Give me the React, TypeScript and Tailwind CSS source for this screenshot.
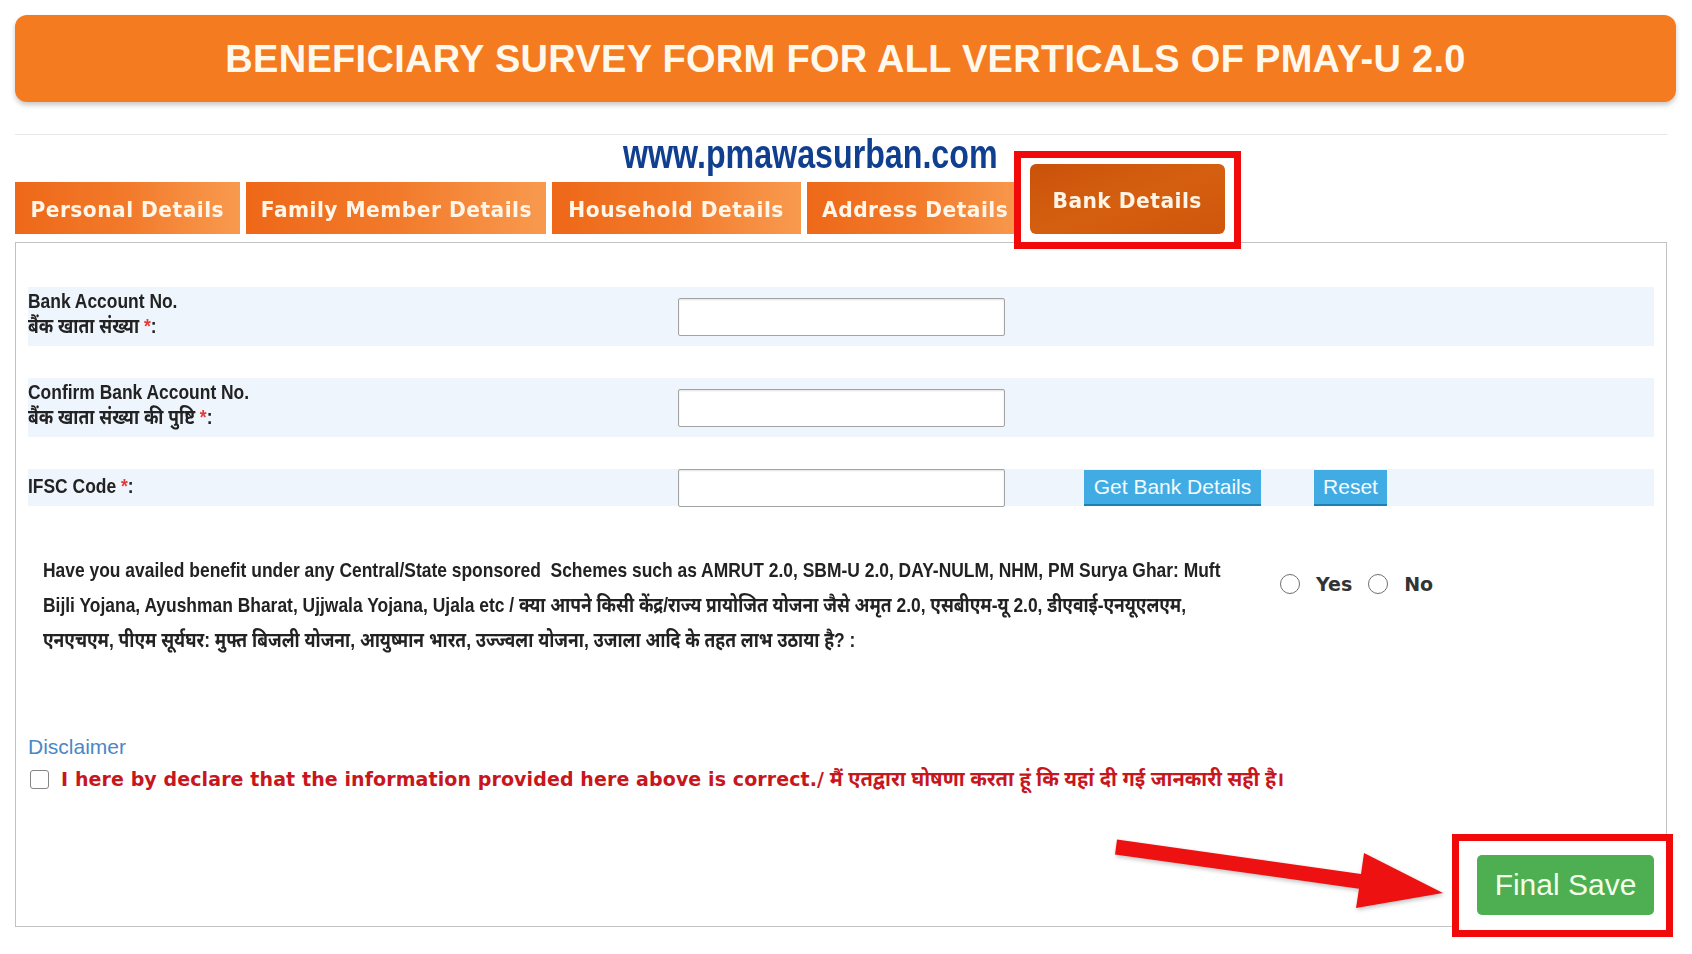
import React from "react";

const sans = "font-['Liberation_Sans','Noto_Sans_Devanagari','Lohit_Devanagari',sans-serif]";

function Tab({ w, children }: { w: string; children: React.ReactNode }) {
  return (
    <div className={`${w} h-[52px] shrink-0 flex items-center justify-center pt-[3px] bg-gradient-to-r from-[#ee6818] via-[#f27a2a] to-[#f89a4e] overflow-hidden`}>
      <span className="block w-max scale-x-[0.92] text-[#fff6ea] font-['DejaVu_Sans',sans-serif] font-bold text-[22px] leading-none tracking-[0.5px] whitespace-nowrap">
        {children}
      </span>
    </div>
  );
}

function Star() {
  return <span className="text-[#e53935]">*</span>;
}

function Input() {
  return (
    <div className="w-[327px] h-[38px] shrink-0 bg-white border border-[#a3a3a3] rounded-[2px] shadow-[inset_0_1px_2px_rgba(0,0,0,0.12)]" />
  );
}

function Narrow({ children, className = "" }: { children: React.ReactNode; className?: string }) {
  return (
    <div className={`w-max origin-left scale-x-[0.83] ${sans} font-bold text-[21px] text-[#222] whitespace-nowrap ${className}`}>
      {children}
    </div>
  );
}

export default function App() {
  return (
    <div className={`relative w-[1692px] h-[954px] bg-white overflow-hidden ${sans}`}>
      {/* Banner */}
      <div className="ml-[15px] mt-[15px] w-[1661px] h-[87px] rounded-[12px] bg-[#f47b20] shadow-[0_3px_5px_rgba(0,0,0,0.22)] flex items-center justify-center">
        <h1 className="text-[38px] font-bold text-[#fff8ec] tracking-[0.3px] leading-none">
          BENEFICIARY SURVEY FORM FOR ALL VERTICALS OF PMAY-U 2.0
        </h1>
      </div>

      <div className="ml-[15px] mt-[32px] w-[1652px] h-px bg-[#e6e6e6]" />

      {/* URL */}
      <div className="h-[30px] -mt-px pl-[623px]">
        <span className="block w-max origin-left scale-x-[0.805] font-bold text-[40px] leading-[40px] text-[#0f3f8e] whitespace-nowrap">
          www.pmawasurban.com
        </span>
      </div>

      {/* Tabs */}
      <div className="ml-[15px] flex items-end gap-[6px] h-[70px]">
        <Tab w="w-[225px]">Personal Details</Tab>
        <Tab w="w-[300px]">Family Member Details</Tab>
        <Tab w="w-[249px]">Household Details</Tab>
        <Tab w="w-[217px]">Address Details</Tab>
        <div className="relative w-[195px] h-[70px] shrink-0">
          <div className="absolute -left-[16px] -right-[16px] -top-[13px] -bottom-[15px] border-[7px] border-[#f00a0a] bg-white z-10" />
          <div className="absolute inset-0 z-20 rounded-[6px] bg-gradient-to-br from-[#c9520a] via-[#d55f10] to-[#cf560c] flex items-center justify-center pt-[4px]">
            <span className="block w-max scale-x-[0.92] text-[#fff4e6] font-['DejaVu_Sans',sans-serif] font-bold text-[22px] leading-none tracking-[0.5px] whitespace-nowrap">
              Bank Details
            </span>
          </div>
        </div>
      </div>

      {/* Panel */}
      <div className="ml-[15px] mt-[8px] w-[1652px] h-[685px] border border-[#c2c2c2] px-[12px] pt-[44px]">
        {/* Row 1 */}
        <div className="h-[59px] bg-[#eef5fc] flex items-center">
          <div className="w-[650px] shrink-0 self-start pt-[1px] leading-[25px]">
            <Narrow>Bank Account No.</Narrow>
            <Narrow>
              बैंक खाता संख्या <Star />:
            </Narrow>
          </div>
          <Input />
        </div>

        {/* Row 2 */}
        <div className="mt-[32px] h-[59px] bg-[#eef5fc] flex items-center">
          <div className="w-[650px] shrink-0 self-start pt-[1px] leading-[25px]">
            <Narrow>Confirm Bank Account No.</Narrow>
            <Narrow>
              बैंक खाता संख्या की पुष्टि <Star />:
            </Narrow>
          </div>
          <Input />
        </div>

        {/* Row 3 */}
        <div className="mt-[32px] h-[37px] bg-[#eef5fc] flex items-center">
          <div className="w-[650px] shrink-0 leading-[25px] pb-[4px]">
            <Narrow>
              IFSC Code <Star />:
            </Narrow>
          </div>
          <Input />
          <button className="ml-[79px] w-[177px] h-[36px] bg-[#41ace3] border-b-2 border-[#1f7fb5] text-[#f4fbff] text-[21px] leading-none">
            Get Bank Details
          </button>
          <button className="ml-[53px] w-[73px] h-[36px] bg-[#41ace3] border-b-2 border-[#1f7fb5] text-[#f4fbff] text-[21px] leading-none">
            Reset
          </button>
        </div>

        {/* Question */}
        <div className="mt-[46px] flex items-start">
          <div className="ml-[15px] w-[1182px] shrink-0">
            <Narrow className="leading-[35px]">
              Have you availed benefit under any Central/State sponsored&nbsp; Schemes such as AMRUT 2.0, SBM-U 2.0, DAY-NULM, NHM, PM Surya Ghar: Muft
              <br />
              Bijli Yojana, Ayushman Bharat, Ujjwala Yojana, Ujala etc / क्या आपने किसी केंद्र/राज्य प्रायोजित योजना जैसे अमृत 2.0, एसबीएम-यू 2.0, डीएवाई-एनयूएलएम,
              <br />
              एनएचएम, पीएम सूर्यघर: मुफ्त बिजली योजना, आयुष्मान भारत, उज्ज्वला योजना, उजाला आदि के तहत लाभ उठाया है? :
            </Narrow>
          </div>
          <div className="ml-[55px] mt-[22px] flex items-center font-['DejaVu_Sans',sans-serif] font-bold text-[19px] text-[#333] leading-none">
            <span className="w-[20px] h-[20px] rounded-full border-[1.5px] border-[#707070] bg-white" />
            <span className="ml-[16px]">Yes</span>
            <span className="ml-[16px] w-[20px] h-[20px] rounded-full border-[1.5px] border-[#707070] bg-white" />
            <span className="ml-[16px]">No</span>
          </div>
        </div>

        {/* Disclaimer */}
        <div className="mt-[78px] text-[21px] leading-[24px] text-[#4a88c6]">Disclaimer</div>
        <div className="mt-[8px] h-[24px] flex items-center">
          <span className="ml-[2px] w-[19px] h-[19px] rounded-[3px] border-[1.5px] border-[#858585] bg-white shrink-0" />
          <span className="ml-[12px] whitespace-nowrap text-[#c8161d] leading-none">
            <span className="font-['DejaVu_Sans',sans-serif] font-bold text-[19px] tracking-[0.1px]">
              I here by declare that the information provided here above is correct./
            </span>
            <span className="font-bold text-[20px]"> मैं एतद्वारा घोषणा करता हूं कि यहां दी गई जानकारी सही है।</span>
          </span>
        </div>

        {/* Final Save */}
        <div className="mt-[64px] flex justify-end">
          <div className="relative w-[177px] h-[60px]">
            <div className="absolute -left-[25px] -right-[19px] -top-[21px] -bottom-[22px] border-[7px] border-[#f00a0a] bg-white z-10" />
            <button className="absolute inset-0 z-20 rounded-[5px] bg-[#4dae52] text-[#f2ffe9] text-[30px] leading-none">
              Final Save
            </button>
          </div>
        </div>
      </div>

      {/* Arrow annotation */}
      <svg className="absolute left-0 top-0 pointer-events-none z-30" width="1692" height="954" viewBox="0 0 1692 954">
        <polygon
          points="1117,839.6 1361,873.9 1364,853 1443,893 1356,908 1359,888.7 1115,854.4"
          fill="#ee1111"
          style={{ filter: "drop-shadow(1px 2px 2px rgba(0,0,0,0.25))" }}
        />
      </svg>
    </div>
  );
}
